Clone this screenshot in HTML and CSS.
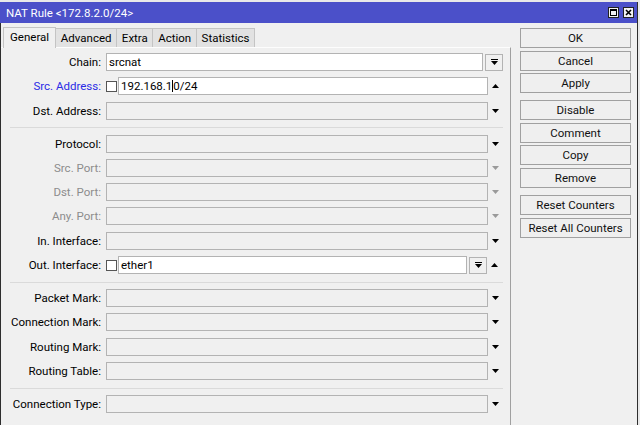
FILE: index.html
```html
<!DOCTYPE html>
<html>
<head>
<meta charset="utf-8">
<title>NAT Rule</title>
<link rel="stylesheet" href="styles.css">
</head>
<body>
<div class="window">
  <div class="titlebar">
    <span class="title">NAT Rule &lt;172.8.2.0/24&gt;</span>
    <div class="winbtns">
      <svg class="wb" width="11" height="11" viewBox="0 0 11 11"><rect x="0.5" y="0.5" width="10" height="10" fill="#f2f2f2" stroke="#222"/><rect x="2.5" y="2.5" width="6" height="6" fill="none" stroke="#000"/><rect x="2" y="2" width="7" height="2" fill="#000"/></svg>
      <svg class="wb" width="11" height="11" viewBox="0 0 11 11"><rect x="0.5" y="0.5" width="10" height="10" fill="#f2f2f2" stroke="#222"/><path d="M3 3 L8 8 M8 3 L3 8" stroke="#000" stroke-width="1.6"/></svg>
    </div>
  </div>
  <div class="content">
    <div class="left">
      <div class="tabs">
        <div class="tab active">General</div>
        <div class="tab">Advanced</div>
        <div class="tab">Extra</div>
        <div class="tab">Action</div>
        <div class="tab">Statistics</div>
      </div>
      <div class="panel">
        <div class="row">
          <div class="lbl">Chain:</div>
          <div class="inp white chain">srcnat</div>
          <div class="sbtn"><svg width="7" height="7" viewBox="0 0 7 7"><rect x="0" y="0" width="7" height="1" fill="#000"/><polygon points="0,2 7,2 3.5,6" fill="#000"/></svg></div>
        </div>
        <div class="row">
          <div class="lbl blue">Src. Address:</div>
          <div class="chk"></div>
          <div class="inp white narrow">192.168.1<span class="caret"></span>0/24</div>
          <div class="arr"><svg width="7" height="4" viewBox="0 0 7 4"><polygon points="0,4 7,4 3.5,0" fill="#000"/></svg></div>
        </div>
        <div class="row">
          <div class="lbl">Dst. Address:</div>
          <div class="inp"></div>
          <div class="arr"><svg width="7" height="4" viewBox="0 0 7 4"><polygon points="0,0 7,0 3.5,4" fill="#000"/></svg></div>
        </div>
        <div class="sep"></div>
        <div class="row">
          <div class="lbl">Protocol:</div>
          <div class="inp"></div>
          <div class="arr"><svg width="7" height="4" viewBox="0 0 7 4"><polygon points="0,0 7,0 3.5,4" fill="#000"/></svg></div>
        </div>
        <div class="row">
          <div class="lbl dis">Src. Port:</div>
          <div class="inp"></div>
          <div class="arr"><svg width="7" height="4" viewBox="0 0 7 4"><polygon points="0,0 7,0 3.5,4" fill="#9a9a9a"/></svg></div>
        </div>
        <div class="row">
          <div class="lbl dis">Dst. Port:</div>
          <div class="inp"></div>
          <div class="arr"><svg width="7" height="4" viewBox="0 0 7 4"><polygon points="0,0 7,0 3.5,4" fill="#9a9a9a"/></svg></div>
        </div>
        <div class="row">
          <div class="lbl dis">Any. Port:</div>
          <div class="inp"></div>
          <div class="arr"><svg width="7" height="4" viewBox="0 0 7 4"><polygon points="0,0 7,0 3.5,4" fill="#9a9a9a"/></svg></div>
        </div>
        <div class="row">
          <div class="lbl">In. Interface:</div>
          <div class="inp"></div>
          <div class="arr"><svg width="7" height="4" viewBox="0 0 7 4"><polygon points="0,0 7,0 3.5,4" fill="#000"/></svg></div>
        </div>
        <div class="row">
          <div class="lbl">Out. Interface:</div>
          <div class="chk"></div>
          <div class="inp white outif">ether1</div>
          <div class="sbtn"><svg width="7" height="7" viewBox="0 0 7 7"><rect x="0" y="0" width="7" height="1" fill="#000"/><polygon points="0,2 7,2 3.5,6" fill="#000"/></svg></div>
          <div class="arr"><svg width="7" height="4" viewBox="0 0 7 4"><polygon points="0,4 7,4 3.5,0" fill="#000"/></svg></div>
        </div>
        <div class="sep"></div>
        <div class="row">
          <div class="lbl">Packet Mark:</div>
          <div class="inp"></div>
          <div class="arr"><svg width="7" height="4" viewBox="0 0 7 4"><polygon points="0,0 7,0 3.5,4" fill="#000"/></svg></div>
        </div>
        <div class="row">
          <div class="lbl">Connection Mark:</div>
          <div class="inp"></div>
          <div class="arr"><svg width="7" height="4" viewBox="0 0 7 4"><polygon points="0,0 7,0 3.5,4" fill="#000"/></svg></div>
        </div>
        <div class="row">
          <div class="lbl">Routing Mark:</div>
          <div class="inp"></div>
          <div class="arr"><svg width="7" height="4" viewBox="0 0 7 4"><polygon points="0,0 7,0 3.5,4" fill="#000"/></svg></div>
        </div>
        <div class="row">
          <div class="lbl">Routing Table:</div>
          <div class="inp"></div>
          <div class="arr"><svg width="7" height="4" viewBox="0 0 7 4"><polygon points="0,0 7,0 3.5,4" fill="#000"/></svg></div>
        </div>
        <div class="sep"></div>
        <div class="row">
          <div class="lbl">Connection Type:</div>
          <div class="inp"></div>
          <div class="arr"><svg width="7" height="4" viewBox="0 0 7 4"><polygon points="0,0 7,0 3.5,4" fill="#000"/></svg></div>
        </div>
      </div>
    </div>
    <div class="side">
      <div class="btn">OK</div>
      <div class="btn">Cancel</div>
      <div class="btn">Apply</div>
      <div class="btn grp">Disable</div>
      <div class="btn">Comment</div>
      <div class="btn">Copy</div>
      <div class="btn">Remove</div>
      <div class="btn grp">Reset Counters</div>
      <div class="btn">Reset All Counters</div>
    </div>
  </div>
</div>
</body>
</html>
```
FILE: styles.css
```css
* { box-sizing: border-box; }
html, body { margin: 0; padding: 0; }
body {
  background: #e9e9e9;
  font-family: Roboto, "Liberation Sans", Arial, sans-serif;
  font-size: 11.5px;
  color: #000;
  overflow: hidden;
  width: 640px;
  height: 425px;
}
.window {
  margin-top: 2px;
  width: 638px;
  height: 423px;
  background: #f0f0f0;
  border-right: 1px solid #2e2e2e;
  display: flex;
  flex-direction: column;
}
.titlebar {
  height: 21px;
  flex: none;
  background: #4b50c9;
  color: #fff;
  display: flex;
  align-items: center;
  padding: 0 3px 0 6px;
}
.title { font-size: 11.5px; }
.winbtns { margin-left: auto; display: flex; gap: 4px; }
.wb { display: block; }
.content {
  flex: 1;
  display: flex;
  border-left: 1px solid #2e2e2e;
  min-height: 0;
}
.left {
  width: 510px;
  flex: none;
  display: flex;
  flex-direction: column;
}
.tabs {
  height: 24px;
  flex: none;
  display: flex;
  align-items: flex-end;
  padding-left: 2px;
}
.tab {
  height: 19px;
  padding: 0 4.7px;
  border: 1px solid #c4c4c4;
  border-bottom: none;
  background: #e2e2e2;
  display: flex;
  align-items: center;
  margin-left: -1px;
}
.tab.active {
  height: 21px;
  margin-left: 0;
  background: #f0f0f0;
  position: relative;
  z-index: 1;
  margin-bottom: -1px;
  padding: 0 6px 2px 6px;
}
.panel {
  flex: 1;
  border-top: 1px solid #fdfdfd;
  border-right: 1px solid #a0a0a0;
  padding: 5px 7px 0 0;
  display: flex;
  flex-direction: column;
  gap: 6.3px;
}
.row {
  display: flex;
  align-items: center;
  height: 18px;
  flex: none;
}
.lbl {
  width: 101px;
  flex: none;
  text-align: right;
  padding-right: 1px;
  margin-right: 4px;
  white-space: nowrap;
}
.lbl.blue { color: #2b2be6; }
.lbl.dis { color: #8c8c8c; }
.inp {
  width: 382px;
  height: 18px;
  flex: none;
  border: 1px solid #b3b3b3;
  background: #f0f0f0;
  padding-left: 2px;
  display: flex;
  align-items: center;
  white-space: nowrap;
  color: #000;
}
.inp.white { background: #fff; }
.inp.chain { width: 377px; }
.inp.narrow { width: 370px; margin-left: 1px; }
.inp.outif { width: 349px; margin-left: 1px; }
.caret {
  display: inline-block;
  width: 1px;
  height: 12px;
  background: #000;
}
.chk {
  width: 11px;
  height: 11px;
  flex: none;
  border: 1px solid #555;
  background: #fff;
}
.arr {
  width: 15px;
  flex: none;
  display: flex;
  justify-content: center;
  align-items: center;
}
.arr svg, .sbtn svg { display: block; }
.sbtn {
  width: 18px;
  height: 17px;
  flex: none;
  margin-left: 2px;
  border: 1px solid #b3b3b3;
  background: #f0f0f0;
  display: flex;
  justify-content: center;
  align-items: center;
}
.sep {
  height: 2.4px;
  flex: none;
  margin-left: 9px;
  width: 493px;
  border-bottom: 1px solid #dadada;
}
.side {
  flex: 1;
  padding: 5px 0 0 9px;
  display: flex;
  flex-direction: column;
  gap: 2.6px;
}
.btn {
  width: 111px;
  height: 20px;
  flex: none;
  border: 1px solid #a0a0a0;
  background: #efefef;
  display: flex;
  justify-content: center;
  align-items: center;
  color: #111;
}
.btn.grp { margin-top: 4.5px; }
```
